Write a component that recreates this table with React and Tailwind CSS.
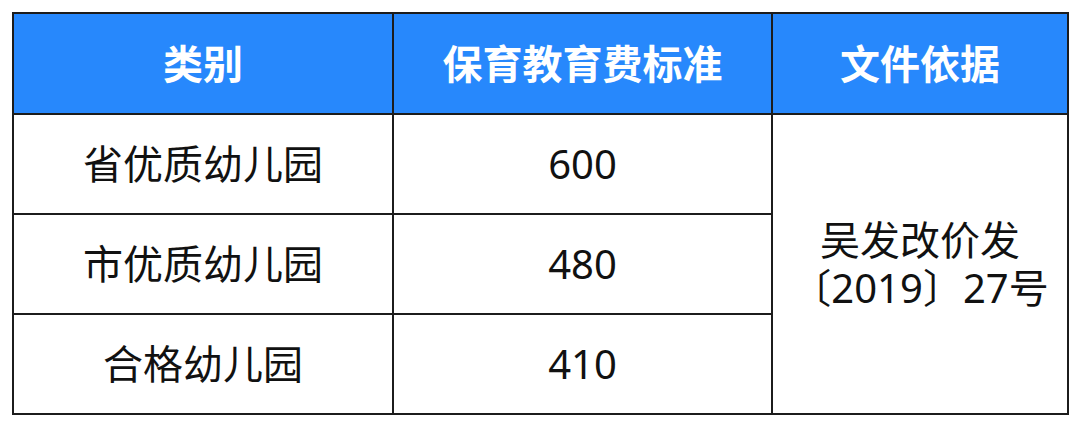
const ROWS = [
  { name: '省优质幼儿园', fee: '600' },
  { name: '市优质幼儿园', fee: '480' },
  { name: '合格幼儿园', fee: '410' },
];

const FONT = 'font-["Noto_Sans","Noto_Sans_CJK_SC",sans-serif]';

export default function App() {
  return (
    <div className={`w-[1080px] h-[427px] bg-white pt-3 pl-3 ${FONT}`}>
      <table className="table-fixed border-collapse w-[1055px] text-[40px] leading-none">
        <colgroup>
          <col className="w-[380px]" />
          <col className="w-[379px]" />
          <col className="w-[296px]" />
        </colgroup>
        <thead>
          <tr className="h-[101px] bg-[#2788fc] text-white">
            <th className="border-2 border-[#1c1c1c] font-bold">类别</th>
            <th className="border-2 border-[#1c1c1c] font-bold">保育教育费标准</th>
            <th className="border-2 border-[#1c1c1c] font-bold">文件依据</th>
          </tr>
        </thead>
        <tbody className="text-[#111]">
          {ROWS.map((row, i) => (
            <tr key={row.name} className="h-[100px]">
              <td className="border-2 border-[#1c1c1c] text-center">{row.name}</td>
              <td className="border-2 border-[#1c1c1c] text-center">{row.fee}</td>
              {i === 0 && (
                <td rowSpan={3} className="border-2 border-[#1c1c1c] text-center">
                  <div className="flex flex-col items-center gap-[4px]">
                    <span className="leading-[44px]">吴发改价发</span>
                    <span className="leading-[44px]">〔2019〕27号</span>
                  </div>
                </td>
              )}
            </tr>
          ))}
        </tbody>
      </table>
    </div>
  );
}
